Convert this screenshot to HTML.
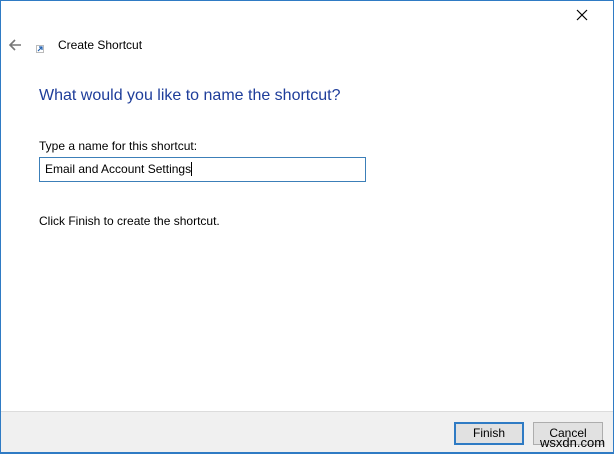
<!DOCTYPE html>
<html><head><style>
*{margin:0;padding:0;box-sizing:border-box}
body{width:614px;height:454px;overflow:hidden;background:#fff;font-family:"Liberation Sans",sans-serif;font-size:12px;color:#000;position:relative}
.win{position:absolute;left:0;top:0;width:614px;height:454px;border:1px solid #2f7bc4;border-bottom-width:2px}
.abs{position:absolute;white-space:nowrap}
.footer{position:absolute;left:1px;right:1px;top:411px;bottom:2px;background:#f0f0f0;border-top:1px solid #dcdcdc}
.btn{position:absolute;top:422px;height:23px;width:70px;background:#e1e1e1;border:1px solid #adadad;text-align:center;line-height:21px;font-size:12px}
</style></head><body>
<div class="win"></div>
<svg class="abs" style="left:576px;top:9px" width="12" height="12"><path d="M1 1L11 11M11 1L1 11" stroke="#000" stroke-width="1.2"/></svg>
<svg class="abs" style="left:8px;top:39px" width="14" height="12"><path d="M13 6H2M7 1L2 6L7 11" stroke="#777" stroke-width="1.6" fill="none"/></svg>
<svg class="abs" style="left:36px;top:45px" width="8" height="8"><rect x="0.5" y="0.5" width="7" height="7" fill="#fff" stroke="#bbb"/><path d="M2 6L6 2M3 2H6V5" stroke="#2060b0" stroke-width="1.2" fill="none"/></svg>
<div class="abs" style="left:58px;top:38px">Create Shortcut</div>
<div class="abs" style="left:39px;top:87px;font-size:16px;color:#1e3d9a">What would you like to name the shortcut?</div>
<div class="abs" style="left:39px;top:139px">Type a name for this shortcut:</div>
<div class="abs" style="left:39px;top:157px;width:327px;height:25px;border:1px solid #3c7fb8;padding:4px 0 0 5px">Email and Account Settings<span style="display:inline-block;width:1px;height:14px;background:#000;vertical-align:-3px"></span></div>
<div class="abs" style="left:39px;top:214px">Click Finish to create the shortcut.</div>
<div class="footer"></div>
<div class="btn" style="left:454px;border:2px solid #2f7bc4;line-height:19px">Finish</div>
<div class="btn" style="left:533px">Cancel</div>
<div class="abs" style="left:540px;top:435px;font-size:13px;color:#000">wsxdn.com</div>
</body></html>
